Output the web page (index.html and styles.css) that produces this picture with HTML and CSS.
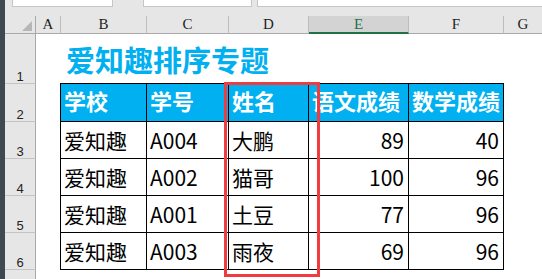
FILE: index.html
```html
<!DOCTYPE html>
<html lang="zh-CN">
<head>
<meta charset="utf-8">
<title>爱知趣排序专题</title>
<link rel="stylesheet" href="styles.css">
</head>
<body>
<div class="app">
  <div class="rail"></div>
  <div class="main">
    <div class="bar">
      <div class="box name"></div>
      <div class="box fx"></div>
      <div class="box formula"></div>
    </div>
    <div class="sheet">
      <!-- column headers -->
      <div class="corner"><span class="tri"></span></div>
      <div class="ch">A</div>
      <div class="ch">B</div>
      <div class="ch">C</div>
      <div class="ch">D</div>
      <div class="ch sel">E</div>
      <div class="ch">F</div>
      <div class="ch last">G</div>

      <!-- row 1: title -->
      <div class="rh">1</div>
      <div></div>
      <div class="title">爱知趣排序专题</div>
      <div></div>

      <!-- row 2: table head -->
      <div class="rh">2</div>
      <div></div>
      <div class="t hd first">学校</div>
      <div class="t hd">学号</div>
      <div class="t hd hl">姓名</div>
      <div class="t hd">语文成绩</div>
      <div class="t hd">数学成绩</div>
      <div></div>

      <div class="rh">3</div>
      <div></div>
      <div class="t first">爱知趣</div>
      <div class="t">A004</div>
      <div class="t">大鹏</div>
      <div class="t num">89</div>
      <div class="t num">40</div>
      <div></div>

      <div class="rh">4</div>
      <div></div>
      <div class="t first">爱知趣</div>
      <div class="t">A002</div>
      <div class="t">猫哥</div>
      <div class="t num">100</div>
      <div class="t num">96</div>
      <div></div>

      <div class="rh">5</div>
      <div></div>
      <div class="t first">爱知趣</div>
      <div class="t">A001</div>
      <div class="t">土豆</div>
      <div class="t num">77</div>
      <div class="t num">96</div>
      <div></div>

      <div class="rh">6</div>
      <div></div>
      <div class="t first">爱知趣</div>
      <div class="t">A003</div>
      <div class="t">雨夜</div>
      <div class="t num">69</div>
      <div class="t num">96</div>
      <div></div>

      <div class="rh"></div>
    </div>
  </div>
</div>
</body>
</html>
```
FILE: styles.css
```css
* {
  box-sizing: border-box;
  margin: 0;
  padding: 0;
}

html,
body {
  width: 542px;
  height: 279px;
  overflow: hidden;
  background: #fff;
}

body {
  font-family: "Noto Sans CJK SC", "Noto Sans", sans-serif;
  color: #000;
}

.app {
  display: flex;
  height: 279px;
}

.rail {
  flex: none;
  width: 5px;
  background: #3e4852;
}

.main {
  flex: 1;
  min-width: 0;
  display: flex;
  flex-direction: column;
  overflow: hidden;
}

/* name box / formula bar strip */
.bar {
  flex: none;
  height: 16px;
  background: #e6e6e6;
  display: flex;
  align-items: flex-start;
  padding-left: 7px;
}

.box {
  height: 7px;
  background: #fff;
  border: 1px solid #c6c6c6;
  border-top: none;
}

.name {
  width: 101px;
}

.fx {
  width: 109px;
  margin-left: 30px;
}

.formula {
  flex: 1;
  margin-left: 5px;
  margin-right: -2px;
}

/* worksheet grid */
.sheet {
  flex: 1;
  min-height: 0;
  overflow: hidden;
  display: grid;
  grid-template-columns: 31px 25px 86px 82px 80px 100px 95px 1fr;
  grid-template-rows: 18px 50px 38px 37px 37px 37px 37px 37px;
}

.corner {
  background: #e6e6e6;
  border-right: 1px solid #a9a9a9;
  border-bottom: 1px solid #a9a9a9;
  display: flex;
  justify-content: flex-end;
  align-items: flex-end;
  padding: 0 3px 2px 0;
}

.tri {
  width: 0;
  height: 0;
  border-left: 10px solid transparent;
  border-bottom: 10px solid #b6b6b6;
}

.ch {
  background: #e6e6e6;
  border-right: 1px solid #bdbdbd;
  border-bottom: 1px solid #a9a9a9;
  font-family: "Liberation Serif", serif;
  font-size: 15px;
  line-height: 15px;
  color: #1e1e1e;
  display: flex;
  justify-content: center;
  align-items: flex-end;
  padding-bottom: 1px;
}

.ch.last {
  border-right: none;
}

.ch.sel {
  background: #d3d3d3;
  color: #217346;
  border-bottom: 2px solid #217346;
  padding-bottom: 0;
}

.rh {
  background: #e6e6e6;
  border-right: 1px solid #a9a9a9;
  border-bottom: 1px solid #c4c4c4;
  font-family: "Liberation Sans", sans-serif;
  font-size: 13px;
  line-height: 13px;
  color: #222;
  display: flex;
  justify-content: center;
  align-items: flex-end;
}

.title {
  grid-column: span 5;
  font-size: 29px;
  line-height: 29px;
  font-weight: bold;
  color: #00b0f0;
  padding: 11px 0 0 5px;
  white-space: nowrap;
}

/* data table */
.t {
  border-right: 1px solid #000;
  border-bottom: 1px solid #000;
  font-size: 21px;
  line-height: 1;
  display: flex;
  align-items: center;
  padding: 0 3px;
  white-space: nowrap;
}

.t.first {
  margin-left: -1px;
  border-left: 1px solid #000;
}

.t.hd {
  margin-top: -1px;
  border-top: 1px solid #000;
  background: #00b0f0;
  color: #fff;
  font-weight: bold;
  font-size: 22px;
  padding-bottom: 6px;
}

.t.num {
  justify-content: flex-end;
  padding-right: 4px;
}

/* highlight frame around the name column */
.hl {
  position: relative;
}

.hl::after {
  content: "";
  position: absolute;
  left: -5px;
  top: -2px;
  width: 90px;
  height: 189px;
  border: 3px solid #f23b3f;
  z-index: 2;
}
```
